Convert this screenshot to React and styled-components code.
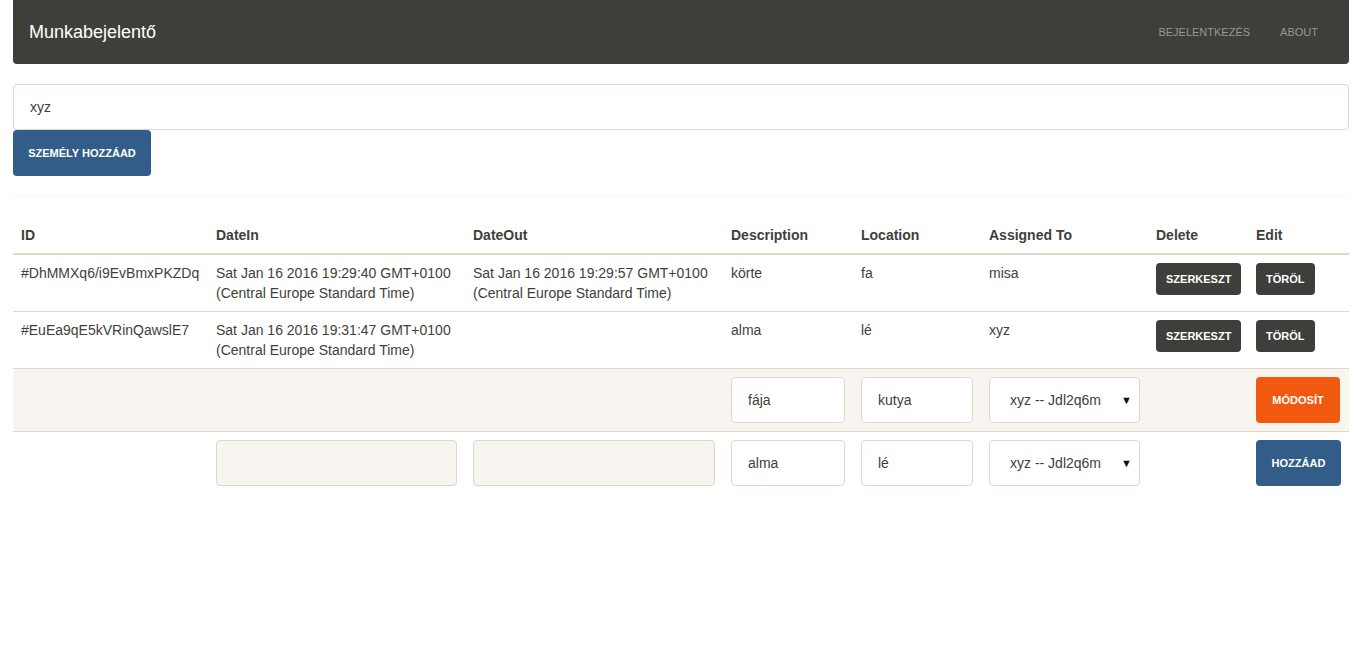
import React from "react";
import styled, { createGlobalStyle } from "styled-components";

const GlobalStyle = createGlobalStyle`
  body {
    margin: 0;
    font-family: "Liberation Sans", Arial, sans-serif;
    font-size: 14px;
    line-height: 20px;
    color: #3e3f3a;
    background: #fff;
  }
  * { box-sizing: border-box; }
`;

const Page = styled.div`
  padding: 0 17px 0 13px;
`;

const Navbar = styled.nav`
  height: 64px;
  background: #3e3f3a;
  border-radius: 0 0 4px 4px;
  display: flex;
  align-items: center;
  justify-content: space-between;
  padding: 0 16px;
`;

const Brand = styled.a`
  color: #fff;
  font-size: 18px;
  line-height: 20px;
  margin-top: -1px;
`;

const NavLinks = styled.ul`
  display: flex;
  list-style: none;
  margin: 0;
  padding: 0;
`;

const NavLink = styled.li`
  color: #98978b;
  font-size: 11px;
  text-transform: uppercase;
  padding: 0 15px;
`;

const TextInput = styled.input`
  display: block;
  width: 100%;
  height: 46px;
  padding: 0 16px;
  font: inherit;
  color: #3e3f3a;
  border: 1px solid #dfd7ca;
  border-radius: 4px;
  background: ${(p) => (p.disabled ? "#f8f5f0" : "#fff")};
  outline: none;
`;

const NameInput = styled(TextInput)`
  margin-top: 20px;
`;

const Button = styled.button`
  display: inline-flex;
  align-items: center;
  justify-content: center;
  white-space: nowrap;
  height: ${(p) => (p.small ? "32px" : "46px")};
  padding: 0 ${(p) => (p.small ? "10px" : "12px")};
  font-family: "Liberation Sans", Arial, sans-serif;
  font-size: 11px;
  font-weight: bold;
  text-transform: uppercase;
  color: #fff;
  border: none;
  border-radius: 4px;
  background: ${(p) =>
    p.variant === "primary"
      ? "#325d88"
      : p.variant === "warning"
      ? "#f0590f"
      : "#3e3f3a"};
  width: ${(p) => p.width || "auto"};
`;

const Divider = styled.hr`
  border: none;
  border-top: 1px solid #f8f5f0;
  margin: 20px 0 20px;
  height: 0;
`;

const Table = styled.table`
  width: 100%;
  border-collapse: collapse;
  table-layout: fixed;
`;

const Th = styled.th`
  text-align: left;
  font-weight: bold;
  padding: 8px;
  border-bottom: 2px solid #dfd7ca;
  vertical-align: bottom;
`;

const Row = styled.tr`
  background: ${(p) => (p.active ? "#f8f5f0" : "transparent")};
  border-top: 1px solid #dfd7ca;
  &:first-child { border-top: none; }
`;

const Td = styled.td`
  padding: 8px;
  vertical-align: top;
`;

const SelectWrap = styled.div`
  position: relative;
`;

const Select = styled.select`
  display: block;
  width: 100%;
  height: 46px;
  padding: 0 37px 0 20px;
  font: inherit;
  color: #3e3f3a;
  border: 1px solid #dfd7ca;
  border-radius: 4px;
  background: #fff;
  appearance: none;
  outline: none;
`;

const Caret = styled.span`
  position: absolute;
  right: 8px;
  top: 13px;
  font-size: 11px;
  color: #111;
  pointer-events: none;
`;

const widths = [195, 257, 258, 130, 128, 167, 100, 101];

const rows = [
  {
    id: "#DhMMXq6/i9EvBmxPKZDq",
    dateIn: "Sat Jan 16 2016 19:29:40 GMT+0100 (Central Europe Standard Time)",
    dateOut: "Sat Jan 16 2016 19:29:57 GMT+0100 (Central Europe Standard Time)",
    desc: "körte",
    loc: "fa",
    to: "misa",
  },
  {
    id: "#EuEa9qE5kVRinQawslE7",
    dateIn: "Sat Jan 16 2016 19:31:47 GMT+0100 (Central Europe Standard Time)",
    dateOut: "",
    desc: "alma",
    loc: "lé",
    to: "xyz",
  },
];

function AssignSelect() {
  return (
    <SelectWrap>
      <Select defaultValue="a">
        <option value="a">xyz -- Jdl2q6mKzR8</option>
      </Select>
      <Caret>▼</Caret>
    </SelectWrap>
  );
}

export default function App() {
  return (
    <>
      <GlobalStyle />
      <Page>
        <Navbar>
          <Brand>Munkabejelentő</Brand>
          <NavLinks>
            <NavLink>Bejelentkezés</NavLink>
            <NavLink>About</NavLink>
          </NavLinks>
        </Navbar>
        <NameInput defaultValue="xyz" />
        <Button variant="primary" width="138px">Személy hozzáad</Button>
        <Divider />
        <Table>
          <colgroup>
            {widths.map((w, i) => (
              <col key={i} style={{ width: w }} />
            ))}
          </colgroup>
          <thead>
            <tr>
              <Th>ID</Th>
              <Th>DateIn</Th>
              <Th>DateOut</Th>
              <Th>Description</Th>
              <Th>Location</Th>
              <Th>Assigned To</Th>
              <Th>Delete</Th>
              <Th>Edit</Th>
            </tr>
          </thead>
          <tbody>
            {rows.map((r) => (
              <Row key={r.id}>
                <Td>{r.id}</Td>
                <Td>{r.dateIn}</Td>
                <Td>{r.dateOut}</Td>
                <Td>{r.desc}</Td>
                <Td>{r.loc}</Td>
                <Td>{r.to}</Td>
                <Td>
                  <Button small>Szerkeszt</Button>
                </Td>
                <Td>
                  <Button small>Töröl</Button>
                </Td>
              </Row>
            ))}
            <Row active>
              <Td />
              <Td />
              <Td />
              <Td>
                <TextInput defaultValue="fája" />
              </Td>
              <Td>
                <TextInput defaultValue="kutya" />
              </Td>
              <Td>
                <AssignSelect />
              </Td>
              <Td />
              <Td>
                <Button variant="warning" width="84px">Módosít</Button>
              </Td>
            </Row>
            <Row>
              <Td />
              <Td>
                <TextInput disabled />
              </Td>
              <Td>
                <TextInput disabled />
              </Td>
              <Td>
                <TextInput defaultValue="alma" />
              </Td>
              <Td>
                <TextInput defaultValue="lé" />
              </Td>
              <Td>
                <AssignSelect />
              </Td>
              <Td />
              <Td>
                <Button variant="primary" width="85px">Hozzáad</Button>
              </Td>
            </Row>
          </tbody>
        </Table>
      </Page>
    </>
  );
}
